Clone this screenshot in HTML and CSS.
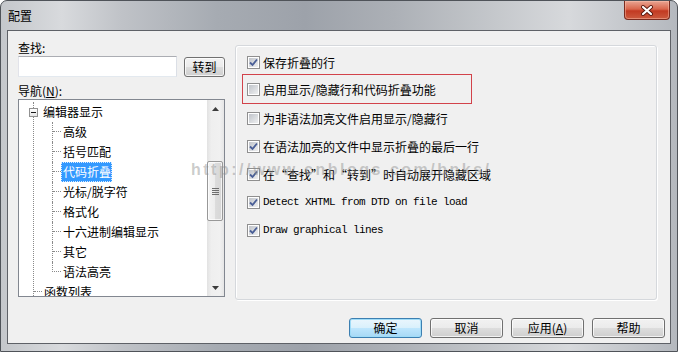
FILE: index.html
```html
<!DOCTYPE html>
<html lang="zh-CN">
<head>
<meta charset="utf-8">
<title>配置</title>
<link rel="stylesheet" href="styles.css">
</head>
<body>
<div class="window">
  <div class="titlebar">
    <span class="title">配置</span>
    <div class="close">
      <svg width="14" height="11" viewBox="0 0 14 11">
        <path d="M3 2 L11 9 M11 2 L3 9" stroke="#5a1a10" stroke-width="4" stroke-linecap="round"/>
        <path d="M3 2 L11 9 M11 2 L3 9" stroke="#ffffff" stroke-width="2.2" stroke-linecap="round"/>
      </svg>
    </div>
  </div>
  <div class="client">
    <div class="top">
      <div class="left">
        <div class="label">查找:</div>
        <div class="find-row">
          <div class="input"></div>
          <button class="btn btn-small">转到</button>
        </div>
        <div class="label nav">导航(<u>N</u>):</div>
        <div class="tree">
          <div class="tree-body">
            <ul class="root">
              <li>
                <div class="row"><span class="expander"></span><span class="text">编辑器显示</span></div>
                <ul class="children">
                  <li><div class="row"><span class="stub"></span><span class="text">高级</span></div></li>
                  <li><div class="row"><span class="stub"></span><span class="text">括号匹配</span></div></li>
                  <li><div class="row"><span class="stub"></span><span class="text selected">代码折叠</span></div></li>
                  <li><div class="row"><span class="stub"></span><span class="text">光标/脱字符</span></div></li>
                  <li><div class="row"><span class="stub"></span><span class="text">格式化</span></div></li>
                  <li><div class="row"><span class="stub"></span><span class="text">十六进制编辑显示</span></div></li>
                  <li><div class="row"><span class="stub"></span><span class="text">其它</span></div></li>
                  <li><div class="row"><span class="stub"></span><span class="text">语法高亮</span></div></li>
                </ul>
              </li>
              <li><div class="row"><span class="stub"></span><span class="text">函数列表</span></div></li>
            </ul>
          </div>
          <div class="scrollbar">
            <div class="sb-btn">
              <svg width="7" height="4" viewBox="0 0 7 4"><path d="M0 4 L3.5 0 L7 4 Z" fill="#3c3c3c"/></svg>
            </div>
            <div class="sb-track">
              <div class="thumb">
                <svg width="7" height="7" viewBox="0 0 7 7"><path d="M0 0.5 H7 M0 2.5 H7 M0 4.5 H7 M0 6.5 H7" stroke="#6e6e6e" stroke-width="1"/></svg>
              </div>
            </div>
            <div class="sb-btn">
              <svg width="7" height="4" viewBox="0 0 7 4"><path d="M0 0 L7 0 L3.5 4 Z" fill="#3c3c3c"/></svg>
            </div>
          </div>
        </div>
      </div>
      <div class="group">
        <div class="opt"><span class="cb"><svg width="9" height="9" viewBox="0 0 9 9"><path d="M1 4.5 L3.5 7 L8 1.5" fill="none" stroke="#4a5f97" stroke-width="1.8"/></svg></span><span class="opt-text">保存折叠的行</span></div>
        <div class="opt marked"><span class="cb"></span><span class="opt-text">启用显示/隐藏行和代码折叠功能</span></div>
        <div class="opt"><span class="cb"></span><span class="opt-text">为非语法加亮文件启用显示/隐藏行</span></div>
        <div class="opt"><span class="cb"><svg width="9" height="9" viewBox="0 0 9 9"><path d="M1 4.5 L3.5 7 L8 1.5" fill="none" stroke="#4a5f97" stroke-width="1.8"/></svg></span><span class="opt-text">在语法加亮的文件中显示折叠的最后一行</span></div>
        <div class="opt"><span class="cb"><svg width="9" height="9" viewBox="0 0 9 9"><path d="M1 4.5 L3.5 7 L8 1.5" fill="none" stroke="#4a5f97" stroke-width="1.8"/></svg></span><span class="opt-text">在“查找”和“转到”时自动展开隐藏区域</span></div>
        <div class="opt"><span class="cb"><svg width="9" height="9" viewBox="0 0 9 9"><path d="M1 4.5 L3.5 7 L8 1.5" fill="none" stroke="#4a5f97" stroke-width="1.8"/></svg></span><span class="opt-text mono">Detect XHTML from DTD on file load</span></div>
        <div class="opt"><span class="cb"><svg width="9" height="9" viewBox="0 0 9 9"><path d="M1 4.5 L3.5 7 L8 1.5" fill="none" stroke="#4a5f97" stroke-width="1.8"/></svg></span><span class="opt-text mono">Draw graphical lines</span></div>
      </div>
    </div>
    <div class="buttons">
      <button class="btn default">确定</button>
      <button class="btn">取消</button>
      <button class="btn">应用(<u>A</u>)</button>
      <button class="btn">帮助</button>
    </div>
  </div>
  <div class="watermark">http://www.cnblogs.com/bnks/</div>
</div>
</body>
</html>
```

FILE: styles.css
```css
* { box-sizing: border-box; }
html, body { margin: 0; background: #ffffff; }
body {
  font-family: "Noto Sans CJK SC", "Liberation Sans", sans-serif;
  font-size: 12px;
  color: #000;
}
.window {
  width: 678px;
  height: 352px;
  border: 1px solid #4f5359;
  border-radius: 7px 7px 0 0;
  background: linear-gradient(90deg, #c4c7cb 0%, #d8dadd 9%, #bfc2c7 18%, #a6abb2 32%, #9da2aa 45%, #acb0b6 58%, #c3c6ca 72%, #d7d9dc 84%, #b4b8be 100%);
  display: flex;
  flex-direction: column;
  position: relative;
  overflow: hidden;
}
.titlebar {
  height: 29px;
  flex: none;
  display: flex;
  align-items: center;
  padding: 0 7px;
}
.title { line-height: 15px; }
.close {
  margin-left: auto;
  align-self: flex-start;
  width: 46px;
  height: 19px;
  border: 1px solid #7a2b1f;
  border-top: none;
  border-radius: 0 0 4px 4px;
  background: linear-gradient(#e9a593 0%, #d9664c 45%, #c23a22 55%, #cc5a3e 100%);
  box-shadow: inset 0 0 0 1px rgba(255, 200, 180, 0.45);
  display: flex;
  align-items: center;
  justify-content: center;
}
.client {
  flex: 1;
  margin: 0 6px 7px;
  border: 1px solid #5e6167;
  background: #f0f0f0;
  padding: 9px 5px 5px 10px;
  display: flex;
  flex-direction: column;
}
.top {
  display: flex;
  align-items: flex-start;
  gap: 10px;
}
.left {
  width: 207px;
  display: flex;
  flex-direction: column;
}
.label { height: 15px; line-height: 15px; }
.nav { margin-top: 6px; }
.find-row {
  margin-top: 1px;
  display: flex;
  justify-content: space-between;
  align-items: flex-start;
}
.input {
  width: 159px;
  height: 21px;
  border: 1px solid #abadb3;
  border-color: #abadb3 #dbdfe6 #e3e9ef #e2e3ea;
  background: #fff;
}
.btn {
  width: 73px;
  height: 20px;
  padding: 0;
  font: inherit;
  line-height: 18px;
  color: #000;
  border: 1px solid #707070;
  border-radius: 3px;
  background: linear-gradient(#f2f2f2 0%, #ebebeb 50%, #dddddd 51%, #cfcfcf 100%);
  box-shadow: inset 0 0 0 1px rgba(255, 255, 255, 0.75);
}
.btn-small { width: 41px; margin-top: 1px; }
.btn.default {
  border-color: #3c7fb1;
  background: linear-gradient(#eaf6fd 0%, #d9f0fc 50%, #bee6fd 51%, #a7d9f5 100%);
  box-shadow: inset 0 0 0 1px #9fdcf8;
}
.tree {
  margin-top: 1px;
  height: 198px;
  border: 1px solid #828790;
  background: #fff;
  display: flex;
}
.tree-body {
  flex: 1;
  overflow: hidden;
  padding-top: 2px;
}
ul { list-style: none; margin: 0; padding: 0; }
.root {
  margin-left: 14px;
  border-left: 1px dotted #8a8a8a;
}
.children { margin-left: 18px; }
.children li { border-left: 1px dotted #8a8a8a; }
.children li:last-child { border-left-color: transparent; }
.children li:last-child .stub {
  margin-left: -1px;
  width: 9px;
  border-left: 1px dotted #8a8a8a;
}
.row {
  height: 20px;
  display: flex;
  align-items: center;
}
.text {
  height: 20px;
  line-height: 20px;
  padding: 0 1px 0 2px;
  white-space: nowrap;
}
.text.selected {
  background: #3399ff;
  color: #fff;
  outline: 1px dotted #d9ecff;
  outline-offset: -1px;
}
.expander {
  flex: none;
  width: 9px;
  height: 9px;
  margin: 0 3px 0 -5px;
  border: 1px solid #919191;
  background: linear-gradient(#1a1a1a, #1a1a1a) center / 5px 1px no-repeat, linear-gradient(#ffffff, #e6e6e6);
}
.stub {
  flex: none;
  align-self: flex-start;
  width: 8px;
  height: 10px;
  border-bottom: 1px dotted #8a8a8a;
}
.scrollbar {
  width: 17px;
  flex: none;
  display: flex;
  flex-direction: column;
  background: linear-gradient(90deg, #e2e2e2 0%, #efefef 25%, #f1f1f1 75%, #e6e6e6 100%);
}
.sb-btn {
  height: 17px;
  flex: none;
  display: flex;
  align-items: center;
  justify-content: center;
}
.sb-track { flex: 1; }
.thumb {
  margin: 44px 0 0 0;
  width: 16px;
  height: 60px;
  border: 1px solid #989898;
  border-radius: 2px;
  background: linear-gradient(90deg, #f4f4f4 0%, #ececec 50%, #dcdcdc 51%, #d6d6d6 100%);
  box-shadow: inset 0 0 0 1px rgba(255, 255, 255, 0.7);
  display: flex;
  align-items: center;
  justify-content: center;
}
.group {
  margin-top: 5px;
  width: 422px;
  height: 255px;
  border: 1px solid #d5d8dc;
  border-radius: 3px;
  box-shadow: inset 1px 1px 0 #ffffff, 1px 1px 0 #ffffff;
  padding: 2px 0 0 11px;
  display: flex;
  flex-direction: column;
}
.opt {
  height: 28px;
  flex: none;
  display: flex;
  align-items: center;
}
.opt.marked {
  height: 30px;
  width: 230px;
  margin: -2px 0 0 -5px;
  padding-left: 4px;
  border: 1px solid #d2424a;
}
.cb {
  flex: none;
  width: 13px;
  height: 13px;
  padding: 1px;
  margin-right: 3px;
  border: 1px solid #8f8f8f;
  background: linear-gradient(135deg, #c0c4ca, #eeeff0) content-box, linear-gradient(#fff, #fff) border-box;
  display: flex;
}
.cb svg { display: block; margin: 0; }
.opt-text { line-height: 15px; white-space: nowrap; }
.mono {
  font-family: "Liberation Mono", monospace;
  font-size: 11px;
  letter-spacing: -0.6px;
}
.buttons {
  margin-top: auto;
  display: flex;
  justify-content: flex-end;
  gap: 8px;
}
.watermark {
  position: absolute;
  left: 190px;
  top: 160px;
  font-family: "Liberation Sans", sans-serif;
  font-weight: bold;
  font-size: 16px;
  letter-spacing: 2.5px;
  color: rgba(140, 140, 140, 0.45);
  white-space: nowrap;
  pointer-events: none;
}
```
